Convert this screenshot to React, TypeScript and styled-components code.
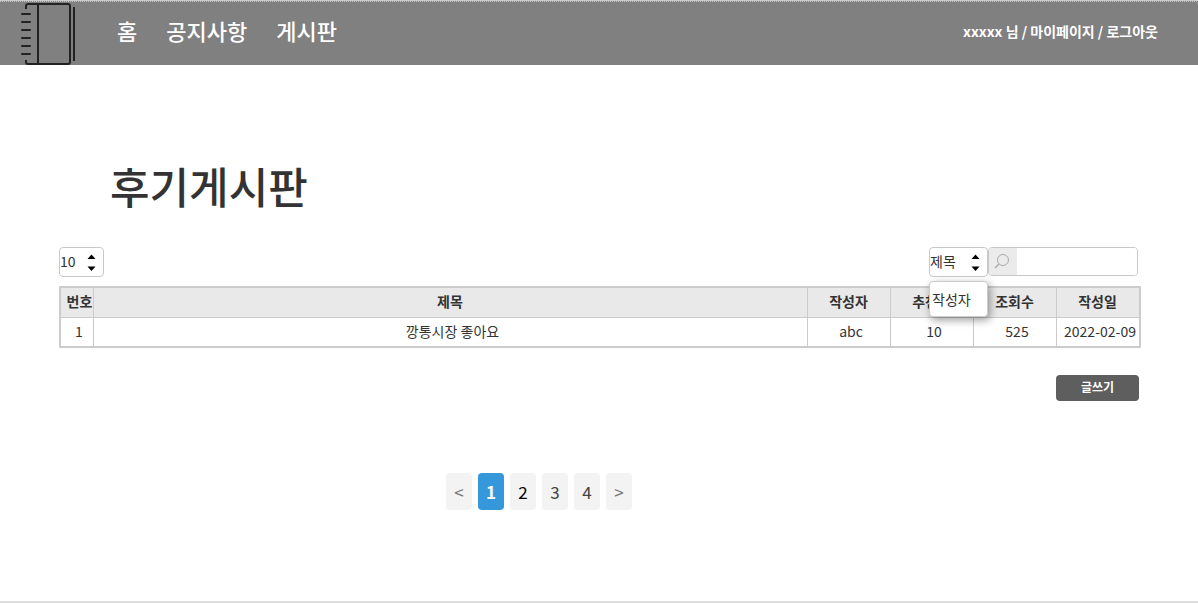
import React, { useState } from 'react';
import styled, { createGlobalStyle } from 'styled-components';

const GlobalStyle = createGlobalStyle`
  * { box-sizing: border-box; }
  body {
    margin: 0;
    background: #fff;
    color: #333;
    font-family: "Noto Sans CJK KR", sans-serif;
    font-size: 14px;
    line-height: 20px;
  }
  button, input, select { font: inherit; color: inherit; }
`;

const Page = styled.div`
  display: flex;
  flex-direction: column;
  min-height: 100vh;
`;

const Header = styled.header`
  display: flex;
  align-items: flex-start;
  height: 65px;
  padding: 1px 40px 0 20px;
  background: repeating-linear-gradient(90deg, #c4c4c4 0 1px, #808080 1px 2px) 0 0 / 100% 1px no-repeat #808080;
  border-top: 1px solid #c8cccc;
  color: #fff;
`;

const Logo = styled.a`
  display: flex;
  width: 58px;
  height: 63px;
`;

const Nav = styled.nav`
  display: flex;
  flex: 1;
  gap: 29px;
  margin: 12px 0 0 39px;
`;

const NavLink = styled.a`
  color: inherit;
  font-size: 22px;
  font-weight: 500;
  line-height: 32px;
  text-decoration: none;
`;

const UserMenu = styled.div`
  margin-top: 19px;
  font-weight: 700;
`;

const UserLink = styled.a`
  color: inherit;
  text-decoration: none;
`;

const Main = styled.main`
  flex: 1;
  padding: 88px 57px 0 59px;
`;

const Title = styled.h1`
  margin: 0 0 30px 51px;
  font-size: 43px;
  font-weight: 500;
  line-height: 64px;
`;

const Toolbar = styled.div`
  display: flex;
  justify-content: space-between;
  align-items: flex-start;
  height: 39px;
  padding-right: 3px;
`;

const SearchForm = styled.form`
  display: flex;
  align-items: flex-start;
`;

const Picker = styled.div<{ $width: number }>`
  position: relative;
  width: ${(p) => p.$width}px;
  height: 30px;
`;

const Select = styled.select`
  appearance: none;
  display: block;
  width: 100%;
  height: 30px;
  padding: 0 0 2px;
  border: 1px solid #c8c8c8;
  border-radius: 4px;
  background: #fff;
`;

const Arrows = styled.svg`
  position: absolute;
  top: 7px;
  right: 8px;
  pointer-events: none;
`;

const Menu = styled.div`
  position: absolute;
  top: 34px;
  left: 0;
  z-index: 1;
  width: 100%;
  border: 1px solid #ccc;
  border-radius: 4px;
  background: #fff;
  box-shadow: 2px 3px 8px rgba(0, 0, 0, 0.4);
`;

const MenuItem = styled.button`
  display: block;
  width: 100%;
  height: 34px;
  padding: 0 2px;
  border: 0;
  background: none;
  text-align: left;
`;

const SearchBox = styled.label`
  display: flex;
  width: 150px;
  height: 29px;
  overflow: hidden;
  border: 1px solid #c8c8c8;
  border-radius: 4px;
`;

const SearchIcon = styled.span`
  flex: none;
  width: 28px;
  background: #ebebeb;
`;

const SearchInput = styled.input`
  flex: 1;
  min-width: 0;
  padding: 0 4px;
  border: 0;
  outline: 0;
`;

const Table = styled.table`
  width: 100%;
  table-layout: fixed;
  border: 2px solid #ccc;
  border-collapse: separate;
  border-spacing: 0;
  text-align: center;
`;

const Column = styled.col<{ $width?: number }>`
  width: ${(p) => (p.$width ? `${p.$width}px` : 'auto')};
`;

const HeadCell = styled.th<{ $indent?: boolean }>`
  height: 30px;
  padding: ${(p) => (p.$indent ? '0 0 4px 5px' : '0 1px 4px 0')};
  border-bottom: 1px solid #ccc;
  background: #e9e9e9;
  font-weight: 700;
  white-space: nowrap;
  & + & { border-left: 1px solid #ccc; }
`;

const Cell = styled.td`
  height: 28px;
  padding: 0 0 2px 4px;
  white-space: nowrap;
  & + & { border-left: 1px solid #ccc; }
`;

const Actions = styled.div`
  display: flex;
  justify-content: flex-end;
  padding: 27px 2px 0 0;
`;

const WriteButton = styled.button`
  width: 83px;
  height: 26px;
  padding: 0 0 2px;
  border: 0;
  border-radius: 4px;
  background: #5e5e5e;
  color: #fff;
  font-size: 12px;
  font-weight: 700;
`;

const Pagination = styled.nav`
  display: flex;
  justify-content: center;
  gap: 6px;
  padding: 72px 122px 0 0;
`;

const PageButton = styled.button<{ $tone?: string; $active?: boolean }>`
  width: 26px;
  height: 37px;
  padding: 0;
  border: 0;
  border-radius: 4px;
  background: ${(p) => (p.$active ? '#3498db' : '#f3f3f3')};
  color: ${(p) => (p.$active ? '#fff' : p.$tone || '#444')};
  font-size: 17px;
  font-weight: ${(p) => (p.$active ? 700 : 400)};
`;

const Footer = styled.footer`
  border-top: 2px solid #dcdcdc;
`;

const NotebookIcon = () => (
  <svg width="58" height="63" viewBox="0 0 58 63" fill="none" stroke="#222" strokeWidth="2" aria-hidden="true">
    <path d="M6 7V4Q6 2 8 2H48Q50 2 50 4V60Q50 62 48 62H8Q6 62 6 60V58M18 2V62M54 5V59" />
    <path strokeLinecap="round" d="M2 12H10M2 20H10M2 28H10M2 36H10M2 44H10M2 52H10" />
  </svg>
);

const UpDown = () => (
  <Arrows width="9" height="18" viewBox="0 0 9 18" aria-hidden="true">
    <path d="M0.5 5 4.5 0.5 8.5 5ZM0.5 12.5H8.5L4.5 17Z" />
  </Arrows>
);

const posts = [
  { no: 1, title: '깡통시장 좋아요', author: 'abc', likes: 10, views: 525, date: '2022-02-09' },
];

export default function App() {
  const [page, setPage] = useState(1);
  const [open, setOpen] = useState(true);
  const [field, setField] = useState('제목');

  return (
    <Page>
      <GlobalStyle />
      <Header>
        <Logo href="#" aria-label="홈"><NotebookIcon /></Logo>
        <Nav>
          <NavLink href="#">홈</NavLink>
          <NavLink href="#">공지사항</NavLink>
          <NavLink href="#">게시판</NavLink>
        </Nav>
        <UserMenu>
          xxxxx 님 / <UserLink href="#">마이페이지</UserLink> / <UserLink href="#">로그아웃</UserLink>
        </UserMenu>
      </Header>
      <Main>
        <Title>후기게시판</Title>
        <Toolbar>
          <Picker $width={45}>
            <Select aria-label="표시 개수"><option>10</option></Select>
            <UpDown />
          </Picker>
          <SearchForm onSubmit={(e) => e.preventDefault()}>
            <Picker $width={59}>
              <Select aria-label="검색 조건" value={field} onChange={(e) => setField(e.target.value)}>
                <option>제목</option>
                <option>작성자</option>
              </Select>
              <UpDown />
              {open && (
                <Menu>
                  <MenuItem type="button" onClick={() => { setField('작성자'); setOpen(false); }}>작성자</MenuItem>
                </Menu>
              )}
            </Picker>
            <SearchBox>
              <SearchIcon>
                <svg width="28" height="27" viewBox="0 0 28 27" fill="none" stroke="#aaa" aria-hidden="true">
                  <circle cx="14" cy="12" r="5.5" />
                  <path d="M10 16 6 20" strokeWidth="1.4" />
                </svg>
              </SearchIcon>
              <SearchInput type="text" aria-label="검색어" />
            </SearchBox>
          </SearchForm>
        </Toolbar>
        <Table>
          <colgroup>
            <Column $width={32} />
            <Column />
            <Column $width={83} />
            <Column $width={83} />
            <Column $width={83} />
            <Column $width={83} />
          </colgroup>
          <thead>
            <tr>
              <HeadCell $indent>번호</HeadCell>
              <HeadCell>제목</HeadCell>
              <HeadCell>작성자</HeadCell>
              <HeadCell>추천수</HeadCell>
              <HeadCell>조회수</HeadCell>
              <HeadCell>작성일</HeadCell>
            </tr>
          </thead>
          <tbody>
            {posts.map((p) => (
              <tr key={p.no}>
                <Cell>{p.no}</Cell>
                <Cell>{p.title}</Cell>
                <Cell>{p.author}</Cell>
                <Cell>{p.likes}</Cell>
                <Cell>{p.views}</Cell>
                <Cell>{p.date}</Cell>
              </tr>
            ))}
          </tbody>
        </Table>
        <Actions><WriteButton type="button">글쓰기</WriteButton></Actions>
        <Pagination aria-label="페이지">
          <PageButton $tone="#777" onClick={() => setPage(Math.max(1, page - 1))}>&lt;</PageButton>
          {[1, 2, 3, 4].map((n) => (
            <PageButton key={n} $active={n === page} $tone={n === 2 ? '#000' : '#444'} onClick={() => setPage(n)}>
              {n}
            </PageButton>
          ))}
          <PageButton $tone="#777" onClick={() => setPage(Math.min(4, page + 1))}>&gt;</PageButton>
        </Pagination>
      </Main>
      <Footer />
    </Page>
  );
}
